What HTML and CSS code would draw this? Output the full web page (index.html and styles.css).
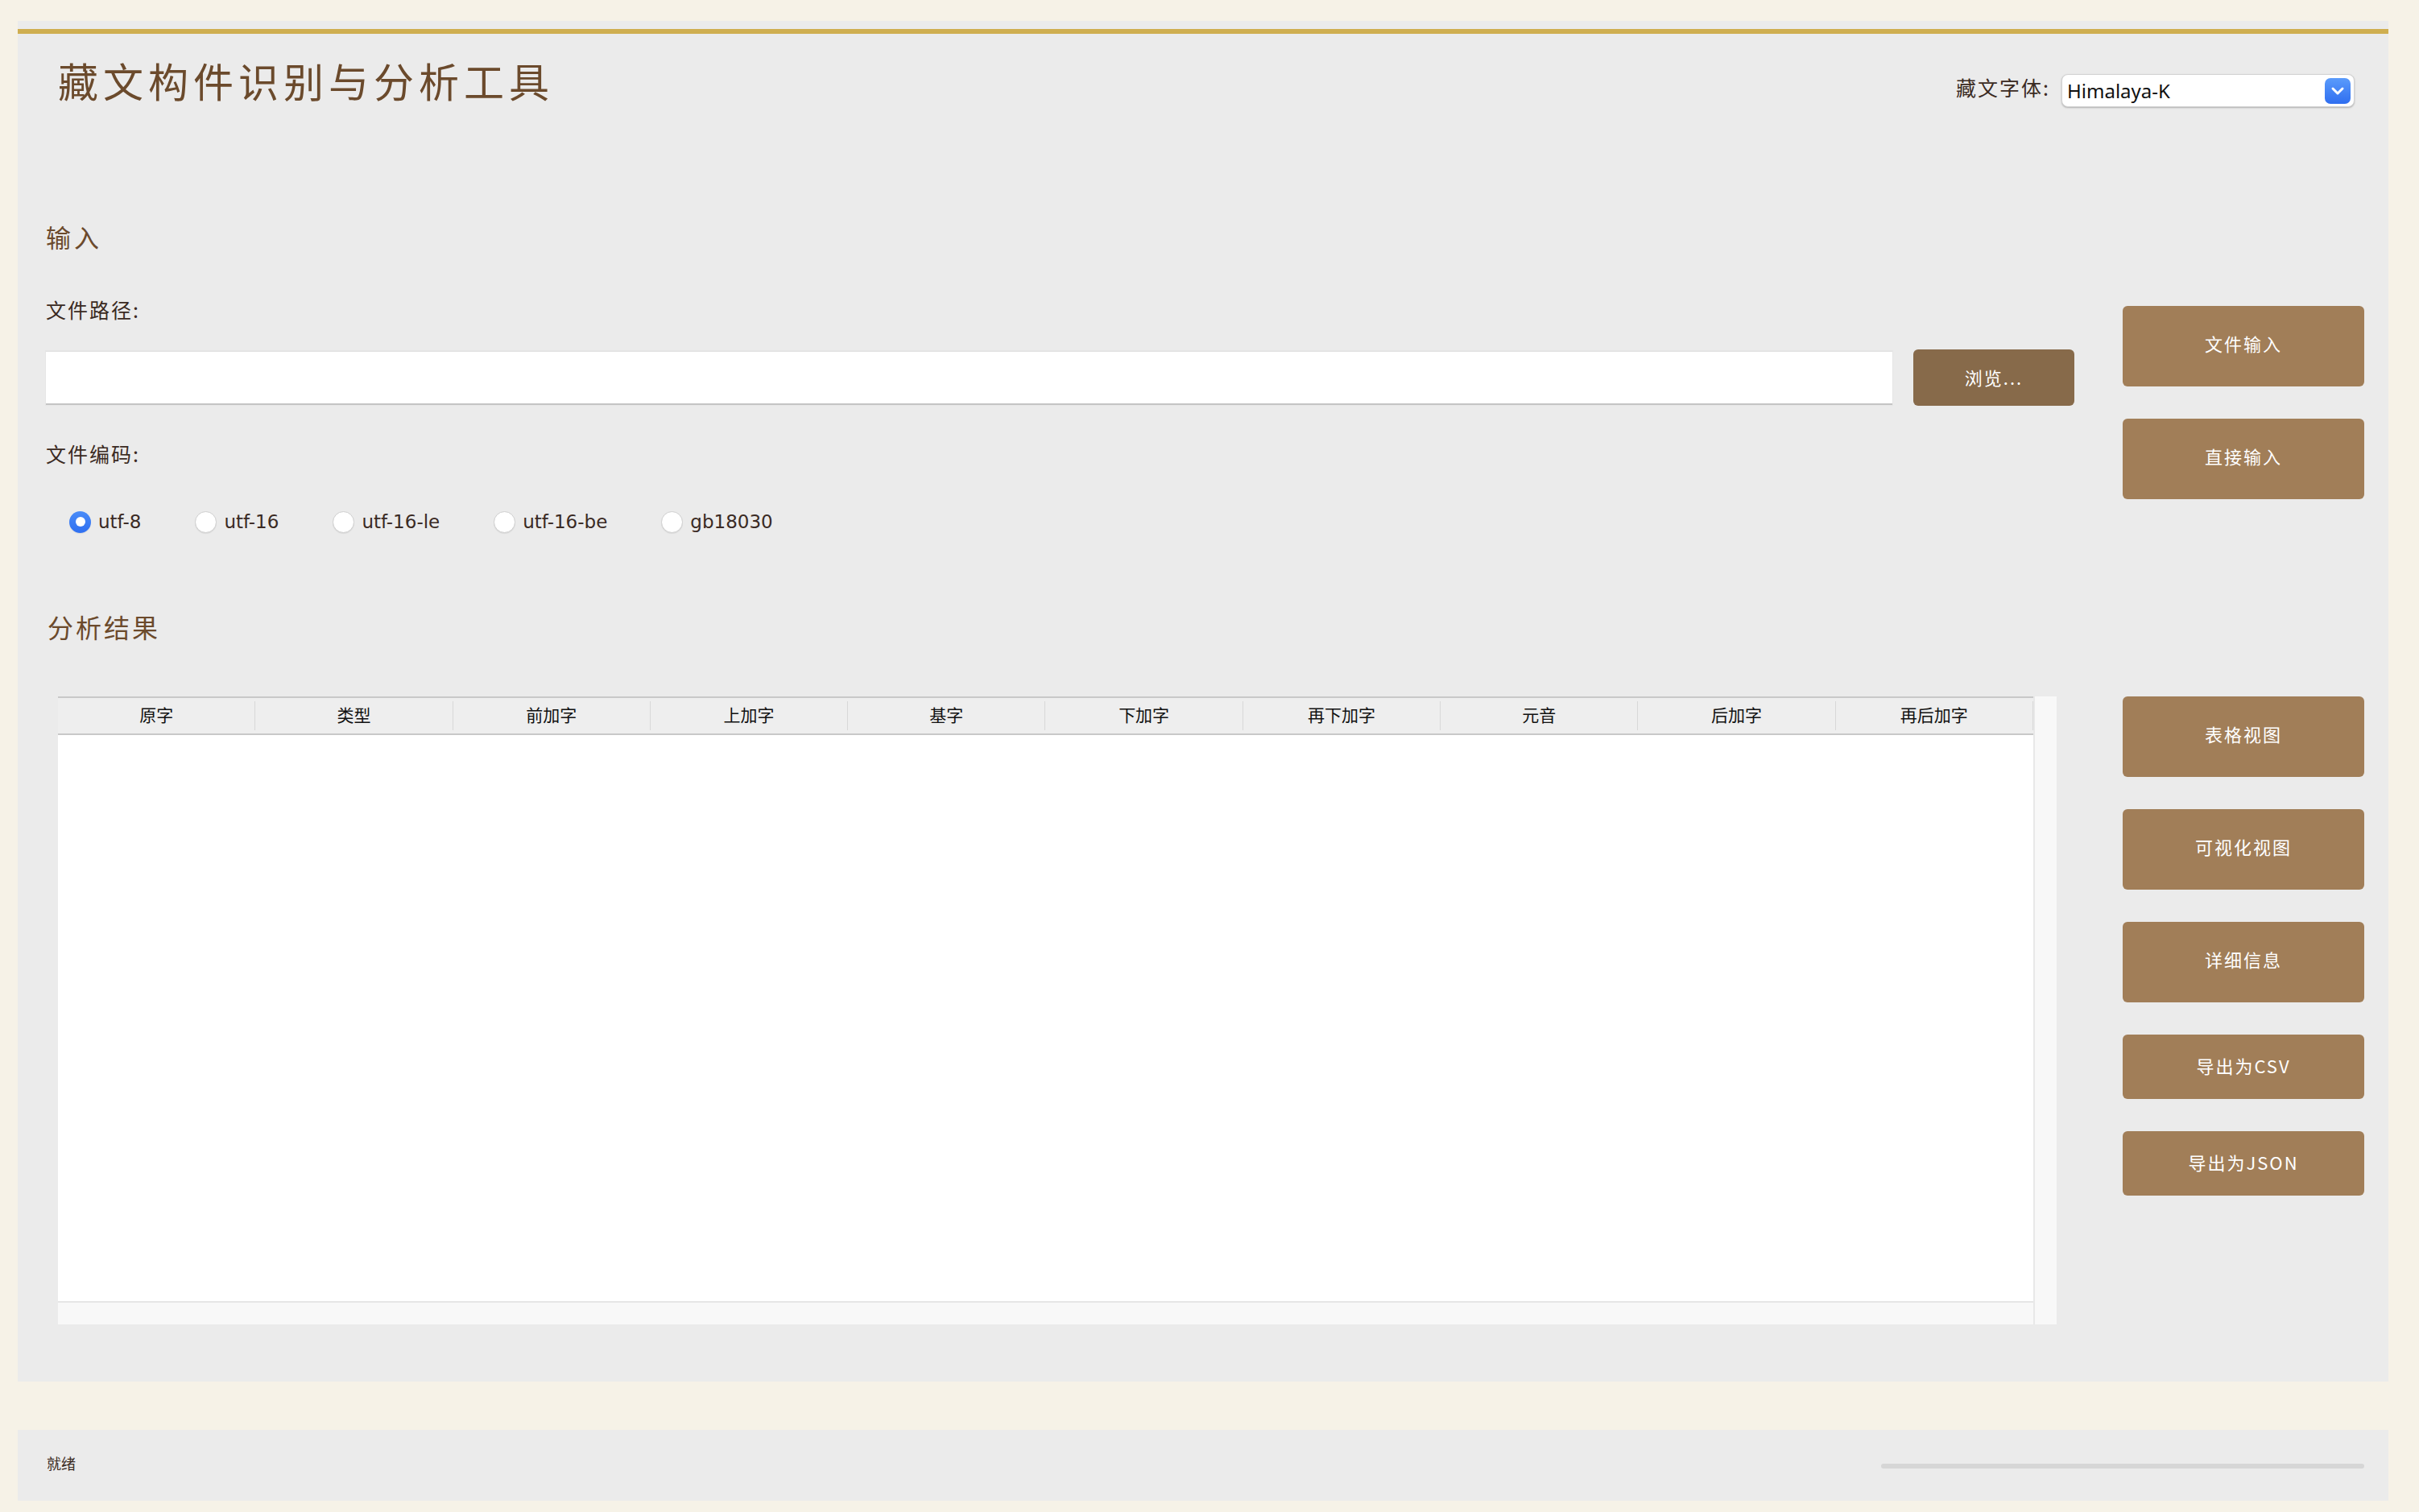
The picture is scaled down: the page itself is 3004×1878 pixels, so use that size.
FILE: index.html
```html
<!DOCTYPE html>
<html lang="zh-CN">
<head>
<meta charset="utf-8">
<title>藏文构件识别与分析工具</title>
<link rel="stylesheet" href="styles.css">
</head>
<body>
<div class="panel">
  <div class="gold"></div>
  <header class="top">
    <h1 class="title">藏文构件识别与分析工具</h1>
    <div class="font-pick">
      <span class="font-label">藏文字体:</span>
      <div class="select">
        <span class="sel-text">Himalaya-K</span>
        <span class="sel-btn"><svg width="18" height="12" viewBox="0 0 18 12"><path d="M3 3 L9 9 L15 3" fill="none" stroke="#fff" stroke-width="3" stroke-linecap="round" stroke-linejoin="round"/></svg></span>
      </div>
    </div>
  </header>

  <div class="row row-input">
    <div class="left">
      <h2 class="sec sec-input">输入</h2>
      <div class="label lbl-path">文件路径:</div>
      <div class="path-row">
        <div class="path-input"></div>
        <div class="btn browse">浏览...</div>
      </div>
      <div class="label lbl-enc">文件编码:</div>
      <div class="radios">
        <div class="radio"><span class="dot on"></span><span class="rtext">utf-8</span></div>
        <div class="radio"><span class="dot"></span><span class="rtext">utf-16</span></div>
        <div class="radio"><span class="dot"></span><span class="rtext">utf-16-le</span></div>
        <div class="radio"><span class="dot"></span><span class="rtext">utf-16-be</span></div>
        <div class="radio"><span class="dot"></span><span class="rtext">gb18030</span></div>
      </div>
    </div>
    <div class="right right-input">
      <div class="btn side tall">文件输入</div>
      <div class="btn side tall">直接输入</div>
    </div>
  </div>

  <div class="row row-result">
    <div class="left">
      <h2 class="sec sec-result">分析结果</h2>
      <div class="table-wrap">
        <div class="table-main">
          <div class="thead">
            <div class="th">原字</div>
            <div class="th">类型</div>
            <div class="th">前加字</div>
            <div class="th">上加字</div>
            <div class="th">基字</div>
            <div class="th">下加字</div>
            <div class="th">再下加字</div>
            <div class="th">元音</div>
            <div class="th">后加字</div>
            <div class="th">再后加字</div>
          </div>
          <div class="tbody"></div>
          <div class="hscroll"></div>
        </div>
        <div class="vscroll"></div>
      </div>
    </div>
    <div class="right right-result">
      <div class="btn side tall">表格视图</div>
      <div class="btn side tall">可视化视图</div>
      <div class="btn side tall">详细信息</div>
      <div class="btn side short">导出为CSV</div>
      <div class="btn side short">导出为JSON</div>
    </div>
  </div>
</div>

<footer class="status">
  <span class="status-text">就绪</span>
  <div class="progress"></div>
</footer>
</body>
</html>
```

FILE: styles.css
```css
html, body {
  margin: 0;
  padding: 0;
}
body {
  background: #f6f2e7;
  width: 3004px;
  height: 1878px;
  overflow: hidden;
  font-family: "Noto Sans CJK SC", "Noto Sans", sans-serif;
}

.panel {
  margin: 26px 38px 0 22px;
  background: #ebebeb;
  padding-top: 10px;
  padding-bottom: 71px;
}
.gold {
  height: 6px;
  background: #cfae50;
}

/* header */
.top {
  height: 208px;
  display: flex;
  justify-content: space-between;
  align-items: flex-start;
}
.title {
  margin: 31px 0 0 50px;
  font-family: "STKaiti", "KaiTi", "Noto Sans CJK SC", sans-serif;
  font-weight: 400;
  font-size: 50px;
  line-height: 52px;
  letter-spacing: 6px;
  color: #6b4a2c;
}
.font-pick {
  margin: 50px 42px 0 0;
  display: flex;
  align-items: flex-start;
  gap: 14px;
}
.font-label {
  font-family: "STKaiti", "KaiTi", "Noto Sans CJK SC", sans-serif;
  font-size: 25px;
  line-height: 33px;
  letter-spacing: 2px;
  color: #3a2a22;
}
.select {
  width: 352px;
  height: 39px;
  background: #fff;
  border: 1px solid #d2d2d2;
  border-radius: 8px;
  box-shadow: 0 1px 2px rgba(0,0,0,0.25);
  display: flex;
  align-items: center;
  justify-content: space-between;
  padding: 0 4px 0 6px;
}
.sel-text {
  font-family: "Noto Sans", sans-serif;
  font-size: 24px;
  color: #111;
}
.sel-btn {
  width: 32px;
  height: 32px;
  border-radius: 7px;
  background: linear-gradient(#5a9bfb, #2f6ef0);
  display: flex;
  align-items: center;
  justify-content: center;
}

/* rows */
.row {
  display: flex;
  padding: 0 30px 0 35px;
  gap: 60px;
}
.left {
  flex: 1;
  min-width: 0;
}
.right {
  width: 300px;
  display: flex;
  flex-direction: column;
  gap: 40px;
}
.right-input { padding-top: 130px; }
.right-result { padding-top: 203px; }

.sec {
  margin: 0;
  font-family: "STKaiti", "KaiTi", "Noto Sans CJK SC", sans-serif;
  font-weight: 400;
  color: #6b4a2c;
}
.sec-input {
  margin-top: 28px;
  font-size: 31px;
  line-height: 32px;
  letter-spacing: 4px;
}
.sec-result {
  margin-top: 100px;
  margin-left: 2px;
  font-size: 32px;
  line-height: 33px;
  letter-spacing: 3px;
}
.label {
  font-family: "STKaiti", "KaiTi", "Noto Sans CJK SC", sans-serif;
  font-size: 25px;
  line-height: 25px;
  letter-spacing: 2px;
  color: #3a2a22;
}
.lbl-path { margin-top: 62px; }
.lbl-enc { margin-top: 47px; }

.path-row {
  margin-top: 37px;
  display: flex;
  align-items: center;
  gap: 26px;
}
.path-input {
  flex: 1;
  height: 64px;
  background: #fff;
  border-top: 1px solid #e2e2e2;
  border-bottom: 2px solid #c4c4c4;
  box-shadow: 0 0 0 1px #e6e6e6;
}

.btn {
  color: #fff;
  font-family: "STKaiti", "KaiTi", "Noto Sans CJK SC", sans-serif;
  display: flex;
  align-items: center;
  justify-content: center;
  border-radius: 6px;
  box-sizing: border-box;
}
.browse {
  width: 200px;
  height: 70px;
  background: #876a4a;
  font-size: 22px;
  letter-spacing: 2px;
  padding-bottom: 3px;
}
.side {
  width: 300px;
  background: #a17e58;
  font-size: 22px;
  letter-spacing: 2px;
}
.tall { height: 100px; padding-bottom: 9px; }
.short { height: 80px; padding-bottom: 4px; }

/* radios */
.radios {
  margin-top: 58px;
  padding-left: 29px;
  display: flex;
  align-items: center;
  gap: 67px;
  height: 28px;
}
.radio {
  display: flex;
  align-items: center;
  gap: 9px;
}
.dot {
  width: 25px;
  height: 25px;
  border-radius: 50%;
  background: #fff;
  border: 1px solid #cfcfcf;
  box-shadow: 0 1px 1px rgba(0,0,0,0.08);
  display: flex;
  align-items: center;
  justify-content: center;
}
.dot.on {
  width: 27px;
  height: 27px;
  border: none;
  background: linear-gradient(#4a8cf8, #2f6ff1);
}
.dot.on::after {
  content: "";
  width: 12px;
  height: 12px;
  border-radius: 50%;
  background: #fff;
}
.rtext {
  font-family: "DejaVu Sans", sans-serif;
  font-size: 23px;
  color: #3a2a24;
}

/* table */
.table-wrap {
  margin: 70px 22px 0 15px;
  display: flex;
  height: 780px;
}
.table-main {
  flex: 1;
  display: flex;
  flex-direction: column;
}
.thead {
  height: 44px;
  border-top: 2px solid #c8c8c8;
  border-bottom: 2px solid #c8c8c8;
  background: #eeeeee;
  display: flex;
  align-items: center;
}
.th {
  flex: 1;
  height: 36px;
  border-right: 1px solid #d8d8d8;
  display: flex;
  align-items: center;
  justify-content: center;
  font-size: 21px;
  color: #111;
  padding-bottom: 4px;
  box-sizing: border-box;
}
.tbody {
  flex: 1;
  background: #fff;
  border-bottom: 2px solid #e6e6e6;
}
.hscroll {
  height: 27px;
  background: #f8f8f8;
}
.vscroll {
  width: 27px;
  background: #f8f8f8;
  border-left: 2px solid #e8e8e8;
}

/* status */
.status {
  margin: 60px 38px 0 22px;
  height: 88px;
  background: #ebebeb;
  display: flex;
  align-items: center;
  justify-content: space-between;
  padding: 0 30px 0 36px;
}
.status-text {
  font-family: "STKaiti", "KaiTi", "Noto Sans CJK SC", sans-serif;
  font-size: 18px;
  color: #3a2a22;
  margin-top: -6px;
}
.progress {
  width: 600px;
  height: 6px;
  border-radius: 3px;
  background: #d6d6d6;
  margin-top: 2px;
}
```
